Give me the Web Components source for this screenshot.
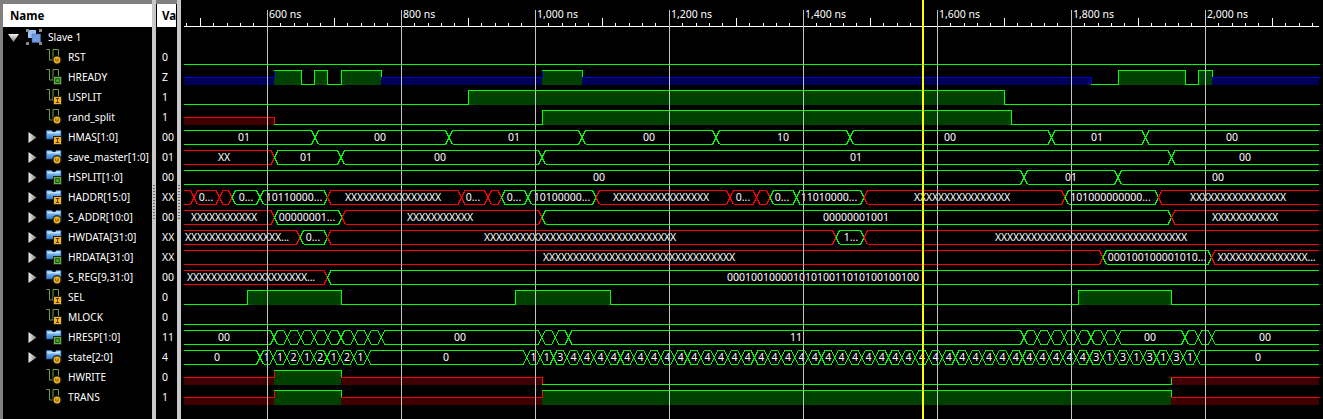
<!DOCTYPE html>
<html>
<head>
<meta charset="utf-8">
<title>Simulation wave</title>
<style>
  html, body { margin: 0; height: 100%; background: #000; overflow: hidden; }
</style>
</head>
<body>
<wave-window></wave-window>
<script>
  const UI_FONT = '"Noto Sans", "Liberation Sans", sans-serif';

  // kind: bit or bus, badge: u / o / i
  const SIGNALS = [
    ['RST', 'bit', 'u', '0'],
    ['HREADY', 'bit', 'o', 'Z'],
    ['USPLIT', 'bit', 'i', '1'],
    ['rand_split', 'bit', 'u', '1'],
    ['HMAS[1:0]', 'bus', 'i', '00'],
    ['save_master[1:0]', 'bus', 'u', '01'],
    ['HSPLIT[1:0]', 'bus', 'o', '00'],
    ['HADDR[15:0]', 'bus', 'i', 'XX'],
    ['S_ADDR[10:0]', 'bus', 'u', '00'],
    ['HWDATA[31:0]', 'bus', 'i', 'XX'],
    ['HRDATA[31:0]', 'bus', 'o', 'XX'],
    ['S_REG[9,31:0]', 'bus', 'u', '00'],
    ['SEL', 'bit', 'i', '0'],
    ['MLOCK', 'bit', 'i', '0'],
    ['HRESP[1:0]', 'bus', 'o', '11'],
    ['state[2:0]', 'bus', 'u', '4'],
    ['HWRITE', 'bit', 'u', '0'],
    ['TRANS', 'bit', 'u', '1']
  ];

  class SignalIcon extends HTMLElement {
    connectedCallback() {
      const kind = this.getAttribute('kind');
      const badge = this.getAttribute('badge');
      const body = kind === 'bus'
        ? `<path d="M.5 3.5 H5.5 L7 5 H9 L10.5 3.5 H15 V12 H.5 Z" fill="url(#blue)" stroke="#2a6fb8" stroke-width=".6"/>
           <rect x="1.5" y="5" width="12.5" height="1.5" fill="#d8efff" opacity=".7"/>`
        : `<path d="M.5 2.5 H3.5 V13 H7 V2.5 H12.5 V9" fill="none" stroke="#6fa050" stroke-width="1"/>`;
      let mark = '';
      if (badge === 'u') {
        mark = `<circle cx="11" cy="13" r="5" fill="#1c1c1c" opacity=".8"/>
                <circle cx="11" cy="13" r="3.4" fill="#f2b61e"/>
                <path d="M9.8 11.3 V14.1 H12.2 V11.3" fill="none" stroke="#7a5206" stroke-width=".9"/>`;
      } else if (badge === 'o') {
        mark = `<rect x="7.5" y="9.5" width="8" height="8" fill="#5fb53e" stroke="#222"/>
                <rect x="9.8" y="11.8" width="3.4" height="3.6" fill="none" stroke="#12460c"/>`;
      } else {
        mark = `<rect x="7.5" y="9.5" width="8" height="8" fill="#f4b426" stroke="#222"/>
                <path d="M9.8 11.5 H13.2 M11.5 11.5 V15.5 M9.8 15.5 H13.2" stroke="#5e3c04" stroke-width="1"/>`;
      }
      this.attachShadow({ mode: 'open' }).innerHTML = `
        <style>:host { display: block; width: 16px; height: 20px; } svg { display: block; }</style>
        <svg width="16" height="20" viewBox="0 0 16 20">
          <defs><linearGradient id="blue" x1="0" y1="0" x2="0" y2="1">
            <stop offset="0" stop-color="#a8d8f8"/><stop offset="1" stop-color="#2a7ad0"/>
          </linearGradient></defs>
          ${body}${mark}
        </svg>`;
    }
  }
  customElements.define('signal-icon', SignalIcon);

  class GroupIcon extends HTMLElement {
    connectedCallback() {
      this.attachShadow({ mode: 'open' }).innerHTML = `
        <style>:host { display: block; width: 16px; height: 20px; } svg { display: block; }</style>
        <svg width="16" height="20" viewBox="0 0 16 20">
          <rect x="2" y="3" width="8" height="8" fill="#9fc0f2"/>
          <rect x="6" y="7" width="8.5" height="8.5" fill="#6f9be0" stroke="#3e66b0" stroke-width=".5"/>
          <g fill="#8a8a8a">
            <rect x="0" y="2" width="3" height="3"/><rect x="13" y="2" width="3" height="3"/>
            <rect x="0" y="15" width="3" height="3"/><rect x="13" y="15" width="3" height="3"/>
          </g>
        </svg>`;
    }
  }
  customElements.define('group-icon', GroupIcon);

  class TreeArrow extends HTMLElement {
    connectedCallback() {
      const open = this.hasAttribute('open');
      const shape = open ? '0,7 11,7 5.5,15' : '0.5,5 8.5,10.5 0.5,16';
      this.attachShadow({ mode: 'open' }).innerHTML = `
        <style>:host { display: block; width: ${open ? 11 : 10}px; height: 20px; } svg { display: block; }</style>
        <svg width="${open ? 11 : 10}" height="20">
          <defs><linearGradient id="g" x1="0" y1="0" x2="${open ? 0 : 1}" y2="${open ? 1 : 0}">
            <stop offset="0" stop-color="#f0f0f0"/><stop offset="1" stop-color="#808080"/>
          </linearGradient></defs>
          <polygon points="${shape}" fill="url(#g)"/>
        </svg>`;
    }
  }
  customElements.define('tree-arrow', TreeArrow);

  class NameRow extends HTMLElement {
    connectedCallback() {
      const kind = this.getAttribute('kind');
      const badge = this.getAttribute('badge');
      const arrow = kind === 'bus' ? '<tree-arrow></tree-arrow>' : '<span class="blank"></span>';
      this.attachShadow({ mode: 'open' }).innerHTML = `
        <style>
          :host { display: flex; align-items: center; height: 20px; padding-left: 25px; gap: 8px; }
          .blank { width: 10px; }
          .label { margin-left: -2px; white-space: nowrap; }
        </style>
        ${arrow}
        <signal-icon kind="${kind}" badge="${badge}"></signal-icon>
        <span class="label"><slot></slot></span>`;
    }
  }
  customElements.define('name-row', NameRow);

  class GroupRow extends HTMLElement {
    connectedCallback() {
      this.attachShadow({ mode: 'open' }).innerHTML = `
        <style>
          :host { display: flex; align-items: center; height: 20px; padding-left: 5px; gap: 7px; }
          .label { margin-left: -1px; white-space: nowrap; }
        </style>
        <tree-arrow open></tree-arrow>
        <group-icon></group-icon>
        <span class="label"><slot></slot></span>`;
    }
  }
  customElements.define('group-row', GroupRow);

  class PaneHeader extends HTMLElement {
    connectedCallback() {
      this.attachShadow({ mode: 'open' }).innerHTML = `
        <style>
          :host {
            display: flex; align-items: center; height: 23px; background: #fff; color: #000;
            font: bold 11.5px ${UI_FONT}; white-space: nowrap;
            padding-left: var(--head-pad, 7px);
          }
        </style>
        <slot></slot>`;
    }
  }
  customElements.define('pane-header', PaneHeader);

  class NamePane extends HTMLElement {
    connectedCallback() {
      const rows = SIGNALS.map(s => `<name-row kind="${s[1]}" badge="${s[2]}">${s[0]}</name-row>`).join('');
      this.attachShadow({ mode: 'open' }).innerHTML = `
        <style>
          :host {
            display: block; width: 149px; background: #000; color: #fff;
            font: 10.2px ${UI_FONT}; overflow: hidden;
          }
        </style>
        <pane-header>Name</pane-header>
        <group-row>Slave 1</group-row>
        ${rows}`;
    }
  }
  customElements.define('name-pane', NamePane);

  class ValuePane extends HTMLElement {
    connectedCallback() {
      const rows = SIGNALS.map(s => `<div class="v">${s[3]}</div>`).join('');
      this.attachShadow({ mode: 'open' }).innerHTML = `
        <style>
          :host {
            display: block; width: 20px; background: #000; color: #fff;
            font: 10.5px ${UI_FONT}; --head-pad: 5px; padding-left: 1px;
          }
          .gap { height: 20px; }
          .v { height: 20px; line-height: 20px; padding-left: 5px; white-space: nowrap; }
          pane-header { margin-right: 1px; }
        </style>
        <pane-header>Va</pane-header>
        <div class="gap"></div>
        ${rows}`;
    }
  }
  customElements.define('value-pane', ValuePane);

  class PaneSash extends HTMLElement {
    connectedCallback() {
      this.attachShadow({ mode: 'open' }).innerHTML = `
        <style>
          :host { display: block; width: 4px; background: #c8c8c8; position: relative; margin-top: -4px; }
          .grip {
            position: absolute; left: 1px; top: 185px; width: 2px; height: 34px;
            background: repeating-linear-gradient(#6a6a6a 0 1px, transparent 1px 3px);
          }
        </style>
        <div class="grip"></div>`;
    }
  }
  customElements.define('pane-sash', PaneSash);

  // Waveform drawing. All x values are page pixels, read off the time axis (0.67 px per ns)
  const LEFT = 184, RIGHT = 1319, ORIGIN = 267.3, STEP = 13.4;
  const GREEN = '#00ff00', RED = '#ff0000', BLUE = '#0000d8';
  const FILL = { g: '#004000', r: '#400000', b: '#000058' };
  const LINE = { g: GREEN, r: RED, b: BLUE };

  // y = top line of the row, segs = [end x, level]; level 1 high, 0 low, x red half, z blue half
  const BIT_ROWS = [
    [50, [[RIGHT, 0]]],
    [70, [[274, 'z'], [301, 1], [314, 0], [327, 1], [341, 0], [381, 1], [542, 'z'], [582, 1], [1091, 'z'], [1118, 0], [1185, 1], [1198, 0], [1212, 1], [RIGHT, 'z']]],
    [90, [[468, 0], [1004, 1], [RIGHT, 0]]],
    [110, [[274, 'x'], [542, 0], [1011, 1], [RIGHT, 0]]],
    [290, [[247, 0], [341, 1], [515, 0], [610, 1], [1078, 0], [1171, 1], [RIGHT, 0]]],
    [310, [[RIGHT, 0]]],
    [370, [[274, 'x'], [341, 1], [542, 'x'], [1171, 0], [RIGHT, 'x']]],
    [390, [[274, 'x'], [341, 1], [542, 'x'], [1171, 1], [RIGHT, 'x']]]
  ];

  const XS16 = 'XXXXXXXXXXXXXXXX', XS32 = XS16 + XS16;
  function repeatEvery(start, count, labels) {
    const out = [];
    for (let i = 0; i < count; i++) out.push([start + STEP * (i + 1), 'g', labels[i % labels.length]]);
    return out;
  }
  const stateSegs = [
    [260, 'g', '0', 217],
    ...repeatEvery(260, 8, ['1', '1', '2', '1', '2', '1', '2', '1']),
    [526.7, 'g', '0', 446],
    ...repeatEvery(526.7, 2, ['1']),
    ...repeatEvery(553.5, 1, ['3']),
    ...repeatEvery(566.9, 39, ['4']),
    ...repeatEvery(1089.5, 8, ['3', '1']),
    [RIGHT, 'g', '0', 1258]
  ];
  const hrespSegs = [
    [274, 'g', '00', 224],
    ...repeatEvery(274, 8, ['']),
    [541.7, 'g', '00', 460],
    ...repeatEvery(541.7, 2, ['']),
    [1024, 'g', '11', 796],
    ...repeatEvery(1024, 7, ['']),
    [1185, 'g', '00', 1150],
    ...repeatEvery(1185, 2, ['']),
    [RIGHT, 'g', '00', 1265]
  ];

  // y = top line, segs = [end x, colour, label, label x]
  const BUS_ROWS = [
    [130, [[315, 'g', '01', 244], [449, 'g', '00', 380], [582, 'g', '01', 514], [716, 'g', '00', 649], [850, 'g', '10', 783], [1051.5, 'g', '00', 950], [1145.5, 'g', '01', 1097], [RIGHT, 'g', '00', 1232]]],
    [150, [[274.5, 'r', 'XX', 224], [341, 'g', '01', 306], [542, 'g', '00', 440], [1171.5, 'g', '01', 856], [RIGHT, 'g', '00', 1245]]],
    [170, [[1024, 'g', '00', 599], [1118, 'g', '01', 1071], [RIGHT, 'g', '00', 1218]]],
    [190, [[194, 'r', ''], [219.5, 'r', '0...', 206], [232, 'r', ''], [260, 'g', '0...', 246], [327.5, 'g', '10110000...', 294], [461.5, 'r', XS16, 393], [488, 'r', '0...', 473], [501.5, 'r', ''], [528, 'g', '0...', 514], [596, 'g', '10100000...', 562], [730, 'r', XS16, 661], [756.5, 'r', '0...', 743], [770, 'r', ''], [796.5, 'g', '0...', 782], [864, 'g', '11010000...', 829], [1065, 'r', XS16, 962], [1158.5, 'g', '101000000000...', 1110.5], [RIGHT, 'r', XS16, 1238]]],
    [210, [[274.5, 'r', 'XXXXXXXXXXX', 224], [342, 'g', '00000001...', 307], [542, 'r', 'XXXXXXXXXXX', 440], [1171.5, 'g', '00000001001', 856], [RIGHT, 'r', 'XXXXXXXXXXX', 1245]]],
    [230, [[300, 'r', XS16 + '...', 237], [327.5, 'g', '0...', 313], [836, 'r', XS32, 580], [864, 'g', '1...', 851], [RIGHT, 'r', XS32, 1091]]],
    [250, [[1103, 'r', XS32, 639], [1211.5, 'g', '000100100001010...', 1157], [RIGHT, 'r', 'XXXXXXXXXXXXXXX...', 1266.5]]],
    [270, [[327.5, 'r', 'XXXXXXXXXXXXXXXXXXXX...', 251], [RIGHT, 'g', '00010010000101010011010100100100', 823]]],
    [330, hrespSegs],
    [350, stateSegs]
  ];

  function bitRow(top, segs) {
    const levelY = l => l === 1 ? top : l === 0 ? top + 14 : top + 7;
    const color = l => l === 'x' ? RED : l === 'z' ? BLUE : GREEN;
    const fillKey = l => l === 'x' ? 'r' : l === 'z' ? 'b' : 'g';
    let fills = '', lines = '', x0 = LEFT;
    segs.forEach((s, i) => {
      const x1 = Math.round(s[0]), l = s[1], y = levelY(l);
      if (l !== 0) fills += `<rect x="${x0}" y="${y}" width="${x1 - x0}" height="${top + 15 - y}" fill="${FILL[fillKey(l)]}"/>`;
      lines += `<path d="M${x0} ${y + .5} H${x1 + 1}" stroke="${color(l)}"/>`;
      if (i < segs.length - 1) {
        const ny = levelY(segs[i + 1][1]);
        lines += `<path d="M${x1 + .5} ${Math.min(y, ny)} V${Math.max(y, ny) + 1}" stroke="${color(l)}"/>`;
      }
      x0 = x1;
    });
    return fills + lines;
  }

  function busRow(top, segs) {
    const bot = top + 14, mid = top + 7, tip = 3.5;
    let out = '', x0 = LEFT;
    segs.forEach((s, i) => {
      const x1 = s[0], stroke = LINE[s[1]];
      const first = i === 0, last = i === segs.length - 1;
      const a = first ? x0 : x0 + tip, b = last ? x1 : x1 - tip;
      let d = `M${a} ${top + .5} H${b} M${a} ${bot + .5} H${b}`;
      if (!first) d += ` M${a} ${top + .5} L${x0} ${mid + .5} L${a} ${bot + .5}`;
      if (!last) d += ` M${b} ${top + .5} L${x1} ${mid + .5} L${b} ${bot + .5}`;
      out += `<path d="${d}" stroke="${stroke}"/>`;
      if (s[2]) {
        const tx = s[3] !== undefined ? s[3] : (x0 + x1) / 2;
        const cls = s[2][0] === 'X' ? ' class="xs"' : '';
        out += `<text x="${tx}" y="${top + 11}" text-anchor="middle"${cls}>${s[2]}</text>`;
      }
      x0 = x1;
    });
    return out;
  }

  function axis() {
    let out = `<path d="M${LEFT} 26.5 H${RIGHT}" stroke="#fff"/>`;
    const stamps = ['600 ns', '800 ns', '1,000 ns', '1,200 ns', '1,400 ns', '1,600 ns', '1,800 ns', '2,000 ns'];
    for (let k = -6; k < 79; k++) {
      const x = Math.floor(ORIGIN + k * STEP) + .5;
      const tall = k % 5 === 0;
      out += `<path d="M${x} ${tall ? 18 : 23} V26" stroke="#fff"/>`;
    }
    stamps.forEach((t, i) => {
      out += `<text x="${ORIGIN + i * 134 + 1.7}" y="18">${t}</text>`;
    });
    return out;
  }

  function gridLines() {
    let out = '';
    for (let i = 0; i < 8; i++) {
      const x = Math.floor(ORIGIN + i * 134) + .5;
      out += `<path d="M${x} 10 V419" stroke="#c4c4c4"/>`;
    }
    return out;
  }

  class WaveView extends HTMLElement {
    connectedCallback() {
      const bits = BIT_ROWS.map(r => bitRow(r[0], r[1])).join('');
      const buses = BUS_ROWS.map(r => busRow(r[0], r[1])).join('');
      this.attachShadow({ mode: 'open' }).innerHTML = `
        <style>
          :host { display: block; flex: 1; background: #000; margin-top: -4px; }
          svg { display: block; }
          path { fill: none; shape-rendering: crispEdges; }
          rect { shape-rendering: crispEdges; }
          text { font: 10.5px ${UI_FONT}; fill: #fff; }
          .xs { letter-spacing: -.15px; }
        </style>
        <svg width="1142" height="419" viewBox="181 0 1142 419">
          ${bits}
          ${buses}
          ${axis()}
          ${gridLines()}
          <rect x="922" y="0" width="2" height="419" fill="#ffff00"/>
        </svg>`;
    }
  }
  customElements.define('wave-view', WaveView);

  class WaveWindow extends HTMLElement {
    connectedCallback() {
      this.attachShadow({ mode: 'open' }).innerHTML = `
        <style>
          :host {
            display: flex; width: 1323px; height: 419px; box-sizing: border-box;
            background: #808080; padding: 4px 0 0 3px; overflow: hidden;
          }
        </style>
        <name-pane></name-pane>
        <pane-sash></pane-sash>
        <value-pane></value-pane>
        <pane-sash></pane-sash>
        <wave-view></wave-view>`;
    }
  }
  customElements.define('wave-window', WaveWindow);
</script>
</body>
</html>
